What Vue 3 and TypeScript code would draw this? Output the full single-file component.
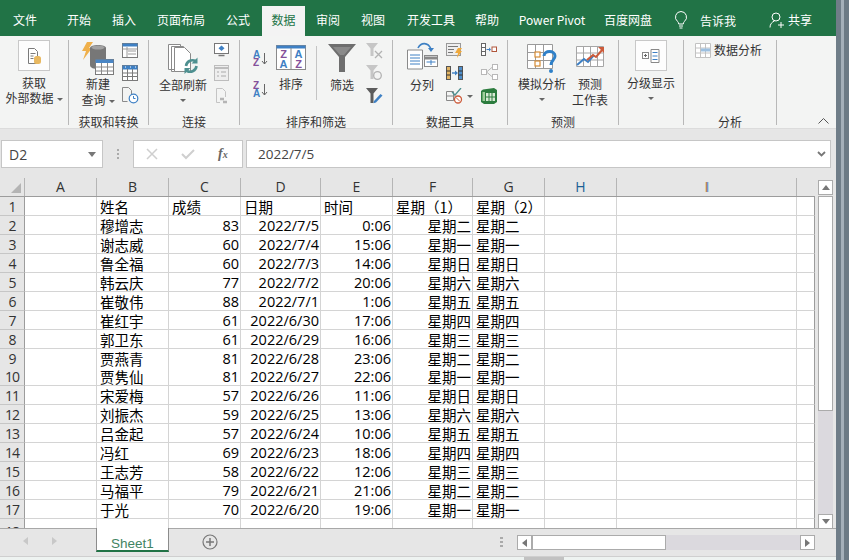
<script setup lang="ts">
const tabs = [
  { t: '文件', w: 50, ml: 0 }, { t: '开始', w: 48, ml: 5 }, { t: '插入', w: 42, ml: 0 }, { t: '页面布局', w: 72, ml: 0 }, { t: '公式', w: 42, ml: 0 },
  { t: '数据', w: 43, ml: 3, active: true }, { t: '审阅', w: 46, ml: 0 }, { t: '视图', w: 44, ml: 0 }, { t: '开发工具', w: 72, ml: 0 }, { t: '帮助', w: 40, ml: 0 },
  { t: 'Power Pivot', w: 90, ml: 0 }, { t: '百度网盘', w: 62, ml: 0 }
]
const cols = [
  { l: 'A', w: 72 }, { l: 'B', w: 72 }, { l: 'C', w: 72 }, { l: 'D', w: 80 }, { l: 'E', w: 72 }, { l: 'F', w: 80 },
  { l: 'G', w: 72 }, { l: 'H', w: 72 }, { l: 'I', w: 180 }, { l: '', w: 18 }
]
const data: [string, string, string, string, string, string][] = [
  ['穆增志', '83', '2022/7/5', '0:06', '星期二', '星期二'],
  ['谢志威', '60', '2022/7/4', '15:06', '星期一', '星期一'],
  ['鲁全福', '60', '2022/7/3', '14:06', '星期日', '星期日'],
  ['韩云庆', '77', '2022/7/2', '20:06', '星期六', '星期六'],
  ['崔敬伟', '88', '2022/7/1', '1:06', '星期五', '星期五'],
  ['崔红宇', '61', '2022/6/30', '17:06', '星期四', '星期四'],
  ['郭卫东', '61', '2022/6/29', '16:06', '星期三', '星期三'],
  ['贾燕青', '81', '2022/6/28', '23:06', '星期二', '星期二'],
  ['贾隽仙', '81', '2022/6/27', '22:06', '星期一', '星期一'],
  ['宋爱梅', '57', '2022/6/26', '11:06', '星期日', '星期日'],
  ['刘振杰', '59', '2022/6/25', '13:06', '星期六', '星期六'],
  ['吕金起', '57', '2022/6/24', '10:06', '星期五', '星期五'],
  ['冯红', '69', '2022/6/23', '18:06', '星期四', '星期四'],
  ['王志芳', '58', '2022/6/22', '12:06', '星期三', '星期三'],
  ['马福平', '79', '2022/6/21', '21:06', '星期二', '星期二'],
  ['于光', '70', '2022/6/20', '19:06', '星期一', '星期一']
]
const head = ['姓名', '成绩', '日期', '时间', '星期（1）', '星期（2）']
</script>

<template>
  <div class="win">
    <div class="main">
      <div class="tabbar">
        <div v-for="t in tabs" :key="t.t" class="tab" :class="{ active: t.active }" :style="{ width: t.w + 'px', marginLeft: t.ml + 'px' }">{{ t.t }}</div>
        <svg class="bulb" width="16" height="20" viewBox="0 0 16 20"><path d="M8 1.500a5.600 5.600 0 0 0-3.400 10c.8.700 1 1.600 1.100 2.500h4.600c.1-.9.300-1.800 1.100-2.500A5.600 5.600 0 0 0 8 1.500zM6 16h4M6.500 18h3" fill="none" stroke="#fff"/></svg>
        <div class="tell">告诉我</div>
        <svg class="user" width="16" height="16" viewBox="0 0 16 16"><circle cx="7" cy="5" r="4" fill="none" stroke="#fff"/><path d="M1 15.500c0-3.500 2-5.500 4.500-6.500M9 13h6M12 10v6" fill="none" stroke="#fff"/></svg>
        <div class="share">共享</div>
      </div>

      <div class="ribbon">
        <section class="grp" style="width:68px">
          <div class="body center">
            <div class="bigbox"><svg width="20" height="20" viewBox="0 0 20 20"><path d="M4.500 2.500h6l3 3v12h-9z" fill="#fff" stroke="#7a7a7a"/><path d="M6.500 7.500h5M6.500 10h3M6.500 12.500h3" stroke="#7a7a7a"/><rect x="10" y="10" width="7" height="8" rx="2.500" fill="#e8b860"/></svg></div>
            <div class="lbl mt">获取</div>
            <div class="lbl">外部数据<i class="caret"></i></div>
          </div>
        </section>
        <section class="grp" style="width:79px">
          <div class="body row" style="padding-left:9px">
            <div class="col" style="width:40px;padding-top:2px">
              <svg width="32" height="33" viewBox="0 0 32 33" style="margin-bottom:1px"><path d="M5 0h6L7 6h3L1 18l3-9H0z" fill="#efb04a"/><path d="M8 6c0-4 16-4 16 0v17c0 3-4 4-8 4s-8-1-8-4z" fill="#777"/><ellipse cx="16" cy="5.500" rx="6.500" ry="2" fill="#a2a2a2"/><rect x="13.500" y="17.500" width="18" height="15" fill="#fff" stroke="#7a7a7a"/><path d="M13.500 17.500h18v3.500h-18z" fill="#4a86c5"/><path d="M13.500 25h18M13.500 29h18M19.500 21v11M25.500 21v11" stroke="#8a8a8a"/></svg>
              <div class="lbl">新建</div>
              <div class="lbl" style="margin-top:1px">查询<i class="caret"></i></div>
            </div>
            <div class="col" style="width:17px;margin-left:4px;padding-top:3px;align-items:flex-start">
              <svg width="16" height="15" viewBox="0 0 16 15"><rect x=".5" y=".5" width="15" height="14" fill="#fff" stroke="#7a7a7a"/><path d="M.5.500h15v3H.5z" fill="#3e80c4"/><path d="M6 8h8M6 11h8M.5 6h15M5 4v10" stroke="#9a9a9a"/></svg>
              <svg width="16" height="16" viewBox="0 0 16 16" style="margin-top:7px"><rect x=".5" y=".5" width="15" height="15" fill="#fff" stroke="#7a7a7a"/><path d="M.5.500h15v4H.5z" fill="#3e80c4"/><path d="M.5 8h15M.5 11.500h15M5.500 4v11M10.500 4v11" stroke="#7a7a7a"/><path d="M3 2h1M8 2h1M13 2h1" stroke="#fff"/></svg>
              <svg width="17" height="17" viewBox="0 0 17 17" style="margin-top:6px"><path d="M.5.500h6l3 3v4M.5.500v14h5" fill="none" stroke="#8a8a8a"/><circle cx="11.500" cy="11.500" r="4.300" fill="#fff" stroke="#3e80c4" stroke-width="1.200"/><path d="M11.500 9v2.500h2" fill="none" stroke="#3e80c4"/></svg>
            </div>
          </div>
          <div class="gname">获取和转换</div>
        </section>
        <section class="grp" style="width:90px">
          <div class="body row" style="padding-left:9px">
            <div class="col" style="width:50px;padding-top:4px">
              <svg width="30" height="30" viewBox="0 0 30 30"><path d="M.5.500h12v25H.5zM3.500 2.500h12v25h-12z" fill="#fff" stroke="#8a8a8a"/><path d="M6.500 3.500h10l6 6v18h-16z" fill="#fff" stroke="#8a8a8a"/><path d="M18 22a6.500 6.500 0 0 1 9.500-5M28.500 22a6.500 6.500 0 0 1-9.500 5" fill="none" stroke="#4e9090" stroke-width="2.600"/><path d="M29.500 13.500v6h-6zM16.500 30v-6h6z" fill="#4e9090"/></svg>
              <div class="lbl" style="margin-top:3px">全部刷新</div>
              <i class="caret solo"></i>
            </div>
            <div class="col" style="width:16px;margin-left:5px;padding-top:3px">
              <svg width="15" height="14" viewBox="0 0 15 14"><rect x=".5" y=".5" width="14" height="10" fill="#fff" stroke="#777"/><path d="M7.500 2.500l3 2.700-3 2.700-3-2.700z" fill="#3e80c4"/><path d="M4.500 12.500h6" stroke="#777" stroke-width="1.500"/></svg>
              <svg width="15" height="16" viewBox="0 0 15 16" style="margin-top:8px"><rect x=".5" y=".5" width="14" height="15" fill="#eee" stroke="#bdbdbd"/><path d="M.5 3h14" stroke="#bdbdbd" stroke-width="2"/><path d="M3 7h2M7 7h5M3 11h2M7 11h5" stroke="#aaa"/></svg>
              <svg width="15" height="16" viewBox="0 0 15 16" style="margin-top:7px"><path d="M2.500.5h6l3 3V9M2.500.5v14H6" fill="none" stroke="#c4c4c4"/><path d="M6 11h4M9 14h4" stroke="#b5b5b5" stroke-width="2.400"/></svg>
            </div>
          </div>
          <div class="gname">连接</div>
        </section>
        <section class="grp" style="width:152px">
          <div class="body row" style="padding-left:12px">
            <div class="col" style="width:16px;padding-top:10px">
              <svg width="15" height="16" viewBox="0 0 15 16"><text x="0" y="7.500" class="az" fill="#3e80c4">A</text><text x="0" y="15.500" class="az" fill="#84509a">Z</text><path d="M11.500 3v11M9 11l2.500 3 2.500-3" fill="none" stroke="#666"/></svg>
              <svg width="15" height="16" viewBox="0 0 15 16" style="margin-top:15px"><text x="0" y="7.500" class="az" fill="#84509a">Z</text><text x="0" y="15.500" class="az" fill="#3e80c4">A</text><path d="M11.500 3v11M9 11l2.500 3 2.500-3" fill="none" stroke="#666"/></svg>
            </div>
            <div class="col" style="width:40px;margin-left:3px;padding-top:5px">
              <svg width="30" height="25" viewBox="0 0 30 25"><rect x=".5" y=".5" width="29" height="24" fill="#fff" stroke="#8a8a8a"/><path d="M.5.500h29v3H.5z" fill="#3e80c4"/><path d="M15 3v21" stroke="#8a8a8a"/><text x="7.500" y="13" class="za" fill="#84509a">Z</text><text x="7.500" y="23" class="za" fill="#3e80c4">A</text><text x="22.500" y="13" class="za" fill="#3e80c4">A</text><text x="22.500" y="23" class="za" fill="#84509a">Z</text></svg>
              <div class="lbl" style="margin-top:6px">排序</div>
            </div>
            <span class="vsep"></span>
            <div class="col" style="width:50px;padding-top:4px">
              <svg width="28" height="28" viewBox="0 0 28 28"><path d="M0 0h28L17 13v15h-6V13z" fill="#6e6e6e"/><path d="M5 3h18l-7 8h-4z" fill="#8a8a8a"/></svg>
              <div class="lbl" style="margin-top:5px">筛选</div>
            </div>
            <div class="col" style="width:17px;margin-left:-1px;padding-top:3px">
              <svg width="17" height="16" viewBox="0 0 17 16"><path d="M0 0h12L7.500 5.500V13h-3V5.500z" fill="#c6c6c6"/><path d="M9 8l7 7M16 8l-7 7" stroke="#b2b2b2" stroke-width="1.300"/></svg>
              <svg width="17" height="16" viewBox="0 0 17 16" style="margin-top:6px"><path d="M0 0h12L7.500 5.500V14h-3V5.500z" fill="#c6c6c6"/><circle cx="11.500" cy="10.500" r="3.800" fill="none" stroke="#b2b2b2" stroke-width="1.300"/></svg>
              <svg width="17" height="16" viewBox="0 0 17 16" style="margin-top:7px"><path d="M0 0h12L7.500 5.500V15h-3V5.500z" fill="#5c5c5c"/><path d="M8 13l6.500-7 2 1.500-6.500 7-2.500.800z" fill="#3e80c4"/></svg>
            </div>
          </div>
          <div class="gname">排序和筛选</div>
        </section>
        <section class="grp" style="width:114px">
          <div class="body row" style="padding-left:11px">
            <div class="col" style="width:36px;padding-top:2px">
              <svg width="31" height="29" viewBox="0 0 31 29"><path d="M.5 8h15v19H.5z" fill="#fff" stroke="#8a8a8a"/><path d="M3 13h10M3 16h10M3 19h10M3 22h10" stroke="#3e80c4"/><rect x="17.500" y="13.500" width="13" height="11" fill="#fff" stroke="#8a8a8a"/><path d="M17.500 16h13" stroke="#8a8a8a" stroke-width="3"/><path d="M19.500 20h9M24 18v5" stroke="#3e80c4"/><path d="M11 6c3-6 10-6 13 1" fill="none" stroke="#3e80c4" stroke-width="1.600"/><path d="M21 6h6l-3 4z" fill="#3e80c4"/></svg>
              <div class="lbl" style="margin-top:6px">分列</div>
            </div>
            <div class="col" style="width:17px;margin-left:6px;padding-top:3px;align-items:flex-start">
              <svg width="17" height="16" viewBox="0 0 17 16"><rect x=".5" y=".5" width="14" height="12" fill="#eee" stroke="#999"/><path d="M2 3.500h10M2 6.500h6M2 9.500h5" stroke="#777"/><path d="M12 5h4l-2 3h2l-5 7 1-5H9z" fill="#efa93c"/></svg>
              <svg width="17" height="14" viewBox="0 0 17 14" style="margin-top:7px"><rect x=".5" y=".5" width="4" height="13" fill="#e2b463" stroke="#555"/><rect x="12.500" y=".5" width="4" height="13" fill="#4d8ecb" stroke="#555"/><path d="M.5 5h4M.5 9h4M12.500 5h4M12.500 9h4" stroke="#333"/><path d="M6 7h4" stroke="#3e80c4" stroke-width="1.400"/><path d="M9 4.500l3 2.500-3 2.500z" fill="#3e80c4"/></svg>
              <svg width="28" height="16" viewBox="0 0 28 16" style="margin-top:8px"><path d="M.5 3.500h7v9h7M.5 3.500v9h7M.5 8h7M7.500 8h2" fill="none" stroke="#888"/><path d="M6 4l3 3 6-7" fill="none" stroke="#4e9090" stroke-width="1.300"/><circle cx="12" cy="11.500" r="3.500" fill="#fff" stroke="#cc5b3a" stroke-width="1.300"/><path d="M10 9.500l4 4" stroke="#cc5b3a"/><path d="M21 7h6l-3 3z" fill="#666"/></svg>
            </div>
            <div class="col" style="width:17px;margin-left:18px;padding-top:3px;align-items:flex-start">
              <svg width="16" height="13" viewBox="0 0 16 13"><rect x=".5" y=".5" width="4" height="12" fill="#fff" stroke="#666"/><path d="M.5 4.500h4M.5 8.500h4" stroke="#666"/><path d="M5.500 6.500h3" stroke="#3e80c4"/><path d="M8 4.500l2 2-2 2z" fill="#3e80c4"/><rect x="11" y="4" width="4.500" height="4.500" fill="#fff" stroke="#b0553a"/></svg>
              <svg width="17" height="16" viewBox="0 0 17 16" style="margin-top:8px"><rect x=".5" y="5.500" width="5" height="5" fill="#fff" stroke="#b8b8b8"/><rect x="11.500" y=".5" width="5" height="5" fill="#fff" stroke="#b8b8b8"/><rect x="11.500" y="10.500" width="5" height="5" fill="#fff" stroke="#b8b8b8"/><path d="M5.500 8l6-5M5.500 8l6 5" stroke="#b8b8b8"/></svg>
              <svg width="16" height="16" viewBox="0 0 16 16" style="margin-top:8px"><path d="M2 1.500L13 0l3 2v12l-3 2H3l-3-2V3z" fill="#2c7c3e"/><path d="M5 5h9v8H5z" fill="#d9ead5"/><path d="M5 9h9M8 5v8M11 5v8" stroke="#2c7c3e"/><path d="M1.500 4h2.500v9H1.500z" fill="#9fcf9a"/></svg>
            </div>
          </div>
          <div class="gname">数据工具</div>
        </section>
        <section class="grp" style="width:110px">
          <div class="body row" style="padding-left:9px">
            <div class="col" style="width:50px;padding-top:4px">
              <svg width="30" height="30" viewBox="0 0 30 30"><path d="M.5.500h25v24H.5zM.5 8.500h25M.5 16.500h25M8.500.5v24M16.500.500v24" fill="#fff" stroke="#9a9a9a"/><rect x="8" y="8" width="5" height="5" fill="#fff" stroke="#d68c35" stroke-width="1.200"/><rect x="8" y="17" width="5" height="5" fill="#fff" stroke="#d68c35" stroke-width="1.200"/><path d="M17 12c0-6 11-6 11 0 0 4-4 4-4 9" fill="none" stroke="#2f80c8" stroke-width="3"/><circle cx="24" cy="27" r="2" fill="#2f80c8"/></svg>
              <div class="lbl" style="margin-top:2px">模拟分析</div>
              <i class="caret solo"></i>
            </div>
            <div class="col" style="width:46px;padding-top:5px">
              <svg width="29" height="25" viewBox="0 0 29 25"><path d="M.5 1.500h27v20H.5zM.5 8h27M.5 15h27M7.500 1.500v20M14.500 1.500v20M21.500 1.500v20" fill="#fff" stroke="#a6a6a6"/><path d="M1 20l7-6 4 3 6-7" fill="none" stroke="#3e80c4" stroke-width="2"/><path d="M11 15l6-5 3 2 7-8" fill="none" stroke="#cc5b3a" stroke-width="2"/><path d="M22 2h6v6z" fill="#cc5b3a"/></svg>
              <div class="lbl" style="margin-top:6px">预测</div>
              <div class="lbl" style="margin-top:1px">工作表</div>
            </div>
          </div>
          <div class="gname">预测</div>
        </section>
        <section class="grp" style="width:64px">
          <div class="body center">
            <div class="bigbox"><svg width="18" height="14" viewBox="0 0 18 14"><rect x=".5" y="3.500" width="6" height="6" fill="#fff" stroke="#888"/><path d="M2 6.500h3M3.500 5v3" stroke="#666"/><path d="M9 .5h8v13H9z" fill="#fff" stroke="#888"/><path d="M10.500 3.500h5M10.500 7h5M10.500 10.500h5" stroke="#3e80c4"/></svg></div>
            <div class="lbl mt">分级显示</div>
            <i class="caret solo"></i>
          </div>
        </section>
        <section class="grp" style="width:92px">
          <div class="body row" style="padding:3px 0 0 11px">
            <svg width="16" height="15" viewBox="0 0 16 15"><path d="M.5.500h15v14H.5zM.5 5h15M.5 10h15M5.500.5v14M10.500.5v14" fill="#fff" stroke="#c2c2c2"/><path d="M6 5.500h9v3H6z" fill="#9dc0e0"/></svg>
            <div class="lbl" style="margin:-1px 0 0 3px">数据分析</div>
          </div>
          <div class="gname">分析</div>
        </section>
        <svg class="collapse" width="11" height="6" viewBox="0 0 11 6"><path d="M.5 5.500l5-5 5 5" fill="none" stroke="#555"/></svg>
      </div>

      <div class="fbar">
        <div class="namebox"><span>D2</span><svg width="8" height="5" viewBox="0 0 8 5"><path d="M0 0h8L4 5z" fill="#777"/></svg></div>
        <div class="dots"><i></i><i></i><i></i></div>
        <div class="fbtns">
          <svg width="12" height="12" viewBox="0 0 12 12"><path d="M1 1l10 10M11 1L1 11" stroke="#cfcfcf" stroke-width="1.500"/></svg>
          <svg width="14" height="12" viewBox="0 0 14 12"><path d="M1 6l4 4 8-8" fill="none" stroke="#cfcfcf" stroke-width="2"/></svg>
          <span class="fx">f<small>x</small></span>
        </div>
        <div class="finput"><span>2022/7/5</span><svg width="9" height="6" viewBox="0 0 9 6"><path d="M1 1l3.500 3.500L8 1" fill="none" stroke="#777" stroke-width="1.800"/></svg></div>
      </div>

      <div class="sheetwrap">
        <div class="sheet">
          <div class="hdr">
            <div class="corner"><span></span></div>
            <div v-for="c in cols" :key="c.l" class="ch" :style="{ width: c.w + 'px' }"><span :class="{ fh: c.l === 'H', fi: c.l === 'I' }">{{ c.l }}</span></div>
          </div>
          <div class="rowline">
            <div class="rh">1</div>
            <div class="cell" style="width:72px"></div>
            <div v-for="(h, i) in head" :key="h" class="cell hc" :style="{ width: cols[i + 1].w + 'px' }">{{ h }}</div>
            <div class="cell" style="width:72px"></div><div class="cell" style="width:180px"></div><div class="cell" style="width:18px"></div>
          </div>
          <div v-for="(r, i) in data" :key="i" class="rowline">
            <div class="rh">{{ i + 2 }}</div>
            <div class="cell" style="width:72px"></div>
            <div class="cell hc" style="width:72px">{{ r[0] }}</div>
            <div class="cell num" style="width:72px">{{ r[1] }}</div>
            <div class="cell num" style="width:80px">{{ r[2] }}</div>
            <div class="cell num" style="width:72px">{{ r[3] }}</div>
            <div class="cell num cjk" style="width:80px">{{ r[4] }}</div>
            <div class="cell hc" style="width:72px">{{ r[5] }}</div>
            <div class="cell" style="width:72px"></div><div class="cell" style="width:180px"></div><div class="cell" style="width:18px"></div>
          </div>
          <div class="rowline">
            <div class="rh low">18</div>
            <div class="cell" style="width:72px"></div><div class="cell" style="width:72px"></div><div class="cell" style="width:72px"></div>
            <div class="cell" style="width:80px"></div><div class="cell" style="width:72px"></div><div class="cell" style="width:80px"></div>
            <div class="cell" style="width:72px"></div><div class="cell" style="width:72px"></div><div class="cell" style="width:180px"></div><div class="cell" style="width:18px"></div>
          </div>
        </div>
        <div class="vscroll">
          <div class="sbtn"><svg width="8" height="5" viewBox="0 0 8 5"><path d="M4 0l4 5H0z" fill="#777"/></svg></div>
          <div class="vthumb"></div>
          <div class="vtrack"></div>
          <div class="sbtn"><svg width="8" height="5" viewBox="0 0 8 5"><path d="M0 0h8L4 5z" fill="#777"/></svg></div>
        </div>
      </div>

      <div class="tabstrip">
        <div class="navs">
          <svg width="5" height="8" viewBox="0 0 5 8"><path d="M5 0v8L0 4z" fill="#c8c8c8"/></svg>
          <svg width="5" height="8" viewBox="0 0 5 8"><path d="M0 0v8l5-4z" fill="#c8c8c8"/></svg>
        </div>
        <div class="sheettab">Sheet1</div>
        <svg class="plus" width="16" height="16" viewBox="0 0 16 16"><circle cx="8" cy="8" r="7" fill="none" stroke="#777" stroke-width="1.200"/><path d="M8 4v8M4 8h8" stroke="#777" stroke-width="1.500"/></svg>
        <div class="dots small"><i></i><i></i><i></i></div>
        <div class="hscroll">
          <div class="hbtn"><svg width="5" height="8" viewBox="0 0 5 8"><path d="M5 0v8L0 4z" fill="#777"/></svg></div>
          <div class="hthumb"></div>
          <div class="htrack"></div>
          <div class="hbtn"><svg width="5" height="8" viewBox="0 0 5 8"><path d="M0 0v8l5-4z" fill="#777"/></svg></div>
        </div>
      </div>
      <div class="status"><span class="stmark"></span></div>
    </div>
    <div class="edge"></div>
  </div>
</template>

<style>
html, body { margin: 0; background: #fff; overflow: hidden; }
</style>

<style scoped>
.win { width: 849px; height: 560px; display: flex; overflow: hidden; font-family: "Noto Sans CJK SC", "Liberation Sans", sans-serif; color: #222; background: #e6e6e6; }
.main { width: 836px; height: 560px; display: flex; flex-direction: column; flex: none; }
.edge { flex: 1; background: linear-gradient(90deg, #6f7d88 0 5px, #a4afb9 5px 8px, #6c7a85 8px); }

.tabbar { height: 36px; background: #217346; display: flex; align-items: flex-end; color: #fff; font-size: 12px; flex: none; }
.tab { height: 30px; line-height: 27px; text-align: center; flex: none; white-space: nowrap; }
.tab.active { background: #f3f3f3; color: #217346; }
.bulb { margin: 0 0 6px 14px; flex: none; }
.tell { margin: 0 0 8px 11px; width: 36px; height: 14px; line-height: 14px; flex: none; }
.user { margin: 0 0 8px 33px; flex: none; }
.share { margin-left: 3px; line-height: 27px; height: 30px; flex: none; }

.ribbon { height: 93px; background: #f3f4f3; display: flex; padding-top: 4px; box-sizing: border-box; border-bottom: 1px solid #dcdcdc; position: relative; flex: none; }
.grp { flex: none; height: 85px; border-right: 1px solid #b8b8b8; display: flex; flex-direction: column; font-size: 12px; }
.body { height: 75px; flex: none; box-sizing: border-box; }
.center { display: flex; flex-direction: column; align-items: center; }
.row { display: flex; align-items: flex-start; }
.col { display: flex; flex-direction: column; align-items: center; flex: none; }
.gname { height: 13px; line-height: 13px; text-align: center; font-size: 12px; color: #333; white-space: nowrap; flex: none; }
.lbl { font-size: 12px; line-height: 15px; color: #333; white-space: nowrap; }
.mt { margin-top: 4px; }
.bigbox { width: 32px; height: 31px; box-sizing: border-box; border: 1px solid #c8c8c8; background: #fdfdfd; display: flex; align-items: center; justify-content: center; flex: none; }
.caret { display: inline-block; border: 3px solid transparent; border-top: 3px solid #666; border-bottom: 0; margin-left: 3px; vertical-align: middle; }
.caret.solo { margin: 7px 0 0; display: block; }
.vsep { width: 1px; height: 54px; background: #c4c4c4; margin: 6px 0 0 5px; flex: none; }
.az { font: 700 10px "Liberation Sans", sans-serif; }
.za { font: 700 11px "Liberation Sans", sans-serif; text-anchor: middle; }
.collapse { position: absolute; right: 7px; bottom: 4px; }

.fbar { height: 49px; flex: none; display: flex; align-items: flex-start; padding-top: 11px; box-sizing: border-box; background: #e6e6e6; }
.namebox { margin-left: 1px; width: 102px; height: 28px; box-sizing: border-box; border: 1px solid #c6c6c6; background: #fff; display: flex; align-items: center; justify-content: space-between; padding: 0 6px 0 7px; flex: none; font: 14px "Open Sans", "Liberation Sans", sans-serif; color: #444; }
.dots { width: 3px; display: flex; flex-direction: column; gap: 2px; margin: 9px 13px 0 14px; flex: none; }
.dots i { width: 2px; height: 2px; background: #aaa; display: block; }
.fbtns { width: 110px; height: 28px; border: 1px solid #c6c6c6; background: #fff; display: flex; align-items: center; gap: 23px; padding-left: 12px; box-sizing: border-box; flex: none; }
.fx { font: italic 700 14px "Liberation Serif", serif; color: #666; }
.fx small { font-size: 10px; }
.finput { margin-left: 3px; width: 585px; height: 28px; box-sizing: border-box; border: 1px solid #c6c6c6; background: #fff; display: flex; align-items: center; justify-content: space-between; padding: 0 4px 0 11px; flex: none; font: 13.500px "Open Sans", "Liberation Sans", sans-serif; color: #444; }

.sheetwrap { height: 350px; flex: none; display: flex; align-items: flex-start; }
.sheet { width: 815px; height: 350px; overflow: hidden; flex: none; font: 14.500px "Open Sans", "Liberation Sans", "Noto Sans CJK SC", sans-serif; color: #000; background: #fff; }
.hdr { height: 18px; display: flex; border-bottom: 1px solid #9c9c9c; background: #e6e6e6; }
.corner { width: 24px; flex: none; border-right: 1px solid #b5b5b5; position: relative; }
.corner span { position: absolute; right: 3px; bottom: 3px; border-left: 10px solid transparent; border-bottom: 10px solid #b4b4b4; }
.ch { flex: none; box-sizing: border-box; text-align: center; border-right: 1px solid #b5b5b5; font-size: 14px; line-height: 18px; color: #333; height: 18px; }
.ch:last-child { border-right: 0; }
.fh { color: #1c5f96; }
.fi { color: #b07a3a; text-shadow: 1px 0 #3a86c8; }
.rowline { display: flex; height: 18.950px; }
.rh { width: 24px; flex: none; background: #e6e6e6; border-right: 1px solid #9c9c9c; border-bottom: 1px solid #c6c6c6; text-align: center; font-size: 14px; letter-spacing: -1px; line-height: 20px; color: #333; height: 18px; }
.rh.low { line-height: 26px; }
.cell { flex: none; box-sizing: border-box; border-right: 1px solid #d4d4d4; border-bottom: 1px solid #d4d4d4; line-height: 20px; padding: 0 1px 0 3px; white-space: nowrap; height: 19px; background: #fff; }
.cell:last-child { border-right: 1px solid #9c9c9c; }
.hc, .cjk { font-family: "Noto Sans CJK SC", sans-serif; }
.num { text-align: right; }

.vscroll { width: 15px; margin: 2px 0 0 3px; height: 349px; flex: none; display: flex; flex-direction: column; }
.sbtn { height: 15px; box-sizing: border-box; border: 1px solid #ababab; background: #fff; display: flex; align-items: center; justify-content: center; flex: none; }
.vthumb { height: 215px; box-sizing: border-box; border: 1px solid #ababab; background: #fff; margin-top: 1px; flex: none; }
.vtrack { flex: 1; background: #dbd9de; }

.tabstrip { height: 28px; flex: none; display: flex; align-items: flex-start; border-top: 1px solid #a8a8a8; box-sizing: border-box; background: #e6e6e6; }
.navs { width: 96px; display: flex; gap: 24px; padding: 8px 0 0 23px; box-sizing: border-box; flex: none; }
.sheettab { width: 73px; height: 24px; margin-top: -1px; box-sizing: border-box; background: #fff; border: 1px solid #8c8c8c; border-top: 0; border-bottom: 2px solid #217346; color: #3f8463; font: 13.500px "Liberation Sans", sans-serif; padding-top: 10px; line-height: 12px; text-align: center; flex: none; }
.plus { margin: 5px 0 0 33px; flex: none; }
.dots.small { margin: 8px 0 0 282px; }
.dots.small i { width: 3px; }
.hscroll { width: 298px; height: 15px; margin: 6px 0 0 14px; display: flex; flex: none; }
.hbtn { width: 15px; box-sizing: border-box; border: 1px solid #ababab; background: #fff; display: flex; align-items: center; justify-content: center; flex: none; }
.hthumb { width: 134px; box-sizing: border-box; border: 1px solid #ababab; background: #fff; flex: none; }
.htrack { flex: 1; background: #dbd9de; }
.status { flex: 1; background: #eef3f1; border-top: 1px solid #cfcfcf; position: relative; }
.stmark { position: absolute; left: 524px; top: 0; width: 40px; height: 3px; background: #c2c2c2; }
</style>
